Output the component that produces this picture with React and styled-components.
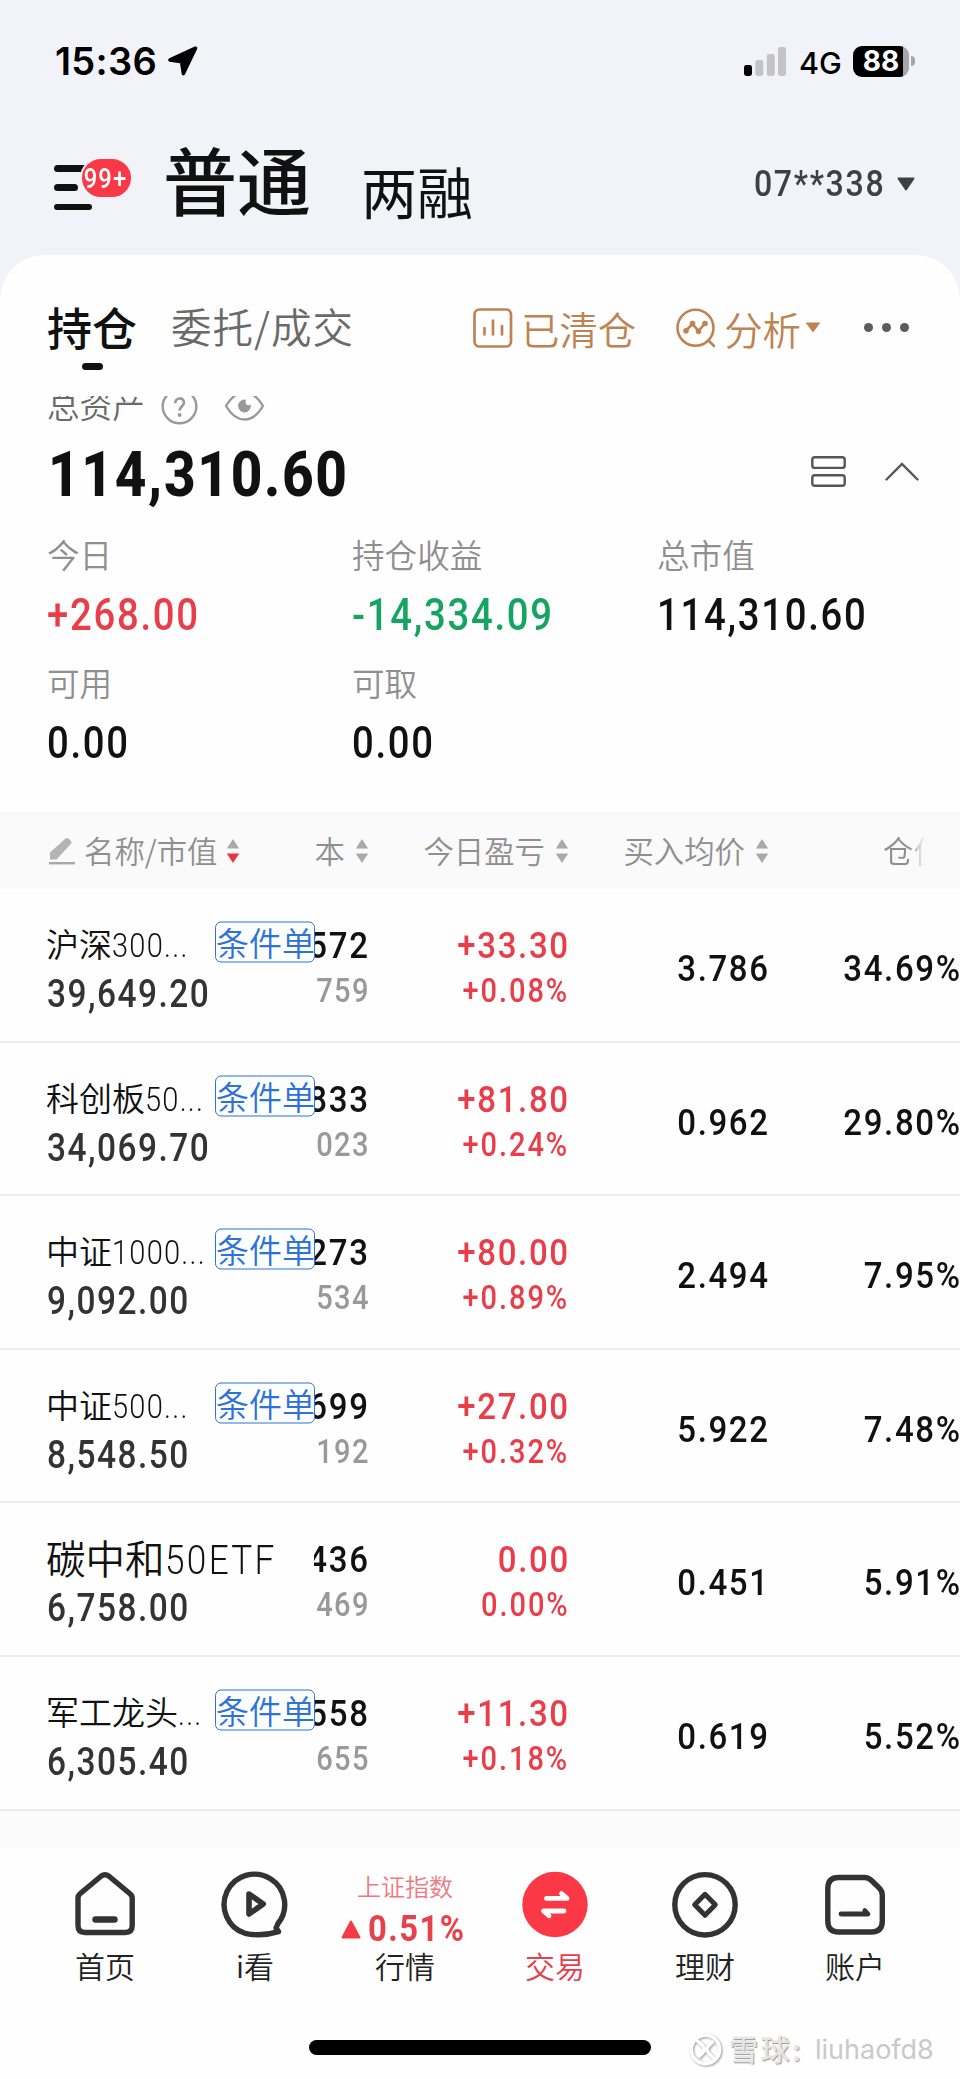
import React from "react";
import styled, { createGlobalStyle } from "styled-components";

const CJK = `"Noto Sans CJK SC", sans-serif`;
const DIGITS = `Roboto, "Noto Sans CJK SC", sans-serif`;
const SYSTEM = `Inter, "Liberation Sans", sans-serif`;

const COLORS = {
  page: "#f2f3f9",
  card: "#fefefe",
  ink: "#111111",
  dark: "#333333",
  mid: "#6a6a6a",
  grey: "#8f8f8f",
  up: "#e93d4a",
  down: "#16a561",
  gold: "#bf8353",
  blue: "#2f71d8",
};

const stats = [
  { label: "今日", value: "+268.00", color: COLORS.up },
  { label: "持仓收益", value: "-14,334.09", color: COLORS.down },
  { label: "总市值", value: "114,310.60" },
  { label: "可用", value: "0.00" },
  { label: "可取", value: "0.00" },
];

const holdings = [
  { name: "沪深", code: "300...", tag: true, value: "39,649.20", price: "572", cost: "759", gain: "+33.30", rate: "+0.08%", avg: "3.786", weight: "34.69%" },
  { name: "科创板", code: "50...", tag: true, value: "34,069.70", price: "833", cost: "023", gain: "+81.80", rate: "+0.24%", avg: "0.962", weight: "29.80%" },
  { name: "中证", code: "1000...", tag: true, value: "9,092.00", price: "273", cost: "534", gain: "+80.00", rate: "+0.89%", avg: "2.494", weight: "7.95%" },
  { name: "中证", code: "500...", tag: true, value: "8,548.50", price: "699", cost: "192", gain: "+27.00", rate: "+0.32%", avg: "5.922", weight: "7.48%" },
  { name: "碳中和", code: "50ETF", tag: false, value: "6,758.00", price: "436", cost: "469", gain: "0.00", rate: "0.00%", avg: "0.451", weight: "5.91%" },
  { name: "军工龙头", code: "...", tag: true, value: "6,305.40", price: "558", cost: "655", gain: "+11.30", rate: "+0.18%", avg: "0.619", weight: "5.52%" },
];

function StatusBar() {
  return (
    <Status>
      <Clock>15:36</Clock>
      <svg width="31" height="31" viewBox="0 0 31 31">
        <path
          d="M28.5 2.2 L3 14 L14.6 15.8 L16.4 27.6 Z"
          stroke="#000"
          strokeWidth="3.6"
          strokeLinejoin="round"
        />
      </svg>
      <Spacer />
      <svg width="42" height="30" viewBox="0 0 42 30">
        <rect x="0" y="19" width="8" height="11" rx="2.4" />
        <rect x="11.3" y="14" width="8" height="16" rx="2.4" fill="#c3c3c8" />
        <rect x="22.8" y="8" width="8" height="22" rx="2.4" fill="#c3c3c8" />
        <rect x="34" y="1" width="8" height="29" rx="2.4" fill="#c3c3c8" />
      </svg>
      <Network>4G</Network>
      <Battery>
        <span>88</span>
      </Battery>
      <BatteryTip />
    </Status>
  );
}

function AccountHeader() {
  return (
    <Header>
      <Menu>
        <MenuLine $width={34} />
        <MenuLine $width={24} />
        <MenuLine $width={38} />
        <Badge>
          <span>99+</span>
        </Badge>
      </Menu>
      <AccountType>普通</AccountType>
      <AccountType $small>两融</AccountType>
      <Spacer />
      <AccountNo>07**338</AccountNo>
      <svg width="18" height="14" viewBox="0 0 18 14">
        <path
          d="M1.5 1.5 H16.5 L9 12.5 Z"
          fill="#404044"
          stroke="#404044"
          strokeWidth="2"
          strokeLinejoin="round"
        />
      </svg>
    </Header>
  );
}

function CardTabs() {
  return (
    <Tabs>
      <Tab $active>持仓</Tab>
      <Tab>委托/成交</Tab>
      <Spacer />
      <Action>
        <svg width="40" height="40" viewBox="0 0 40 40" fill="none" stroke="currentColor" strokeWidth="2.7" strokeLinecap="round">
          <rect x="1.5" y="1.5" width="36.5" height="37" rx="5" />
          <path d="M11.5 20 V26.5 M20 12.5 V26.5 M29 18 V26.5" />
        </svg>
        已清仓
      </Action>
      <Action $gap={8}>
        <svg width="40" height="40" viewBox="0 0 40 40" fill="none" stroke="currentColor" strokeWidth="2.6" strokeLinecap="round">
          <circle cx="19.5" cy="19.8" r="18" />
          <path d="M33 33 L38 38" />
          <path d="M10 22.5 L16.5 16 L22.5 23 L29 15.5" />
          <g fill="currentColor" stroke="none">
            <circle cx="10" cy="22.8" r="2.8" />
            <circle cx="16.5" cy="15.6" r="2.8" />
            <circle cx="22.5" cy="23.2" r="2.8" />
            <circle cx="29" cy="15.5" r="2.8" />
          </g>
        </svg>
        分析
      </Action>
      <Caret width="16" height="11" viewBox="0 0 16 11">
        <path d="M0.5 0.5 H15.5 L8 10.5 Z" fill="#bf8353" />
      </Caret>
      <Dots>
        <i />
        <i />
        <i />
      </Dots>
    </Tabs>
  );
}

function Assets() {
  return (
    <>
      <AssetTitle>
        <span>总资产</span>
        <svg width="37" height="37" viewBox="0 0 37 37" fill="none" stroke="#999" strokeWidth="2.4">
          <circle cx="18.5" cy="18.5" r="16.8" />
          <path d="M14.2 15.2 C14.2 8.8 23.2 9 23 14.8 C22.9 18.2 18.7 18.4 18.6 22.6" strokeWidth="2.6" />
          <circle cx="18.6" cy="27" r="1.9" fill="#999" stroke="none" />
        </svg>
        <svg width="41" height="30" viewBox="0 0 41 30" fill="none" stroke="#999" strokeWidth="2.4">
          <path d="M2 15 Q10 1.5 20.5 1.5 Q31 1.5 39 15 Q31 28.5 20.5 28.5 Q10 28.5 2 15 Z" strokeLinejoin="round" />
          <circle cx="20.5" cy="15" r="6.4" fill="#999" stroke="none" />
          <circle cx="24.8" cy="11" r="3.2" fill="#fefefe" stroke="none" />
        </svg>
      </AssetTitle>
      <TotalRow>
        <Total>114,310.60</Total>
        <Spacer />
        <svg width="35" height="31" viewBox="0 0 35 31" fill="none" stroke="#555" strokeWidth="2.4">
          <rect x="1.3" y="1.3" width="32.4" height="10.6" rx="2.5" />
          <rect x="1.3" y="19.2" width="32.4" height="10.6" rx="2.5" />
        </svg>
        <svg width="34" height="19" viewBox="0 0 34 19" fill="none" stroke="#555" strokeWidth="2.4" strokeLinecap="round">
          <path d="M1.5 17.5 L17 2 L32.5 17.5" />
        </svg>
      </TotalRow>
      <StatGrid>
        {stats.map((item) => (
          <div key={item.label}>
            <StatLabel>{item.label}</StatLabel>
            <StatValue $color={item.color}>{item.value}</StatValue>
          </div>
        ))}
      </StatGrid>
    </>
  );
}

function SortArrows({ active }) {
  return (
    <svg width="14" height="26" viewBox="0 0 14 26">
      <path d="M7 1 L13.2 10.5 H0.8 Z" fill="#a9a9a9" />
      <path d="M7 25 L13.2 15.5 H0.8 Z" fill={active ? "#e8343f" : "#a9a9a9"} />
    </svg>
  );
}

function TableHead() {
  return (
    <HeadRow>
      <HeadCell $left>
        <svg width="26" height="28" viewBox="0 0 26 28">
          <path d="M1 22.5 V15.5 L16.5 1.5 Q18 0.3 19.5 1.5 L22 4 Q23.2 5.4 22 6.8 L7.5 22.5 Z" fill="#b4b4b4" />
          <rect x="0" y="25" width="26" height="2.4" fill="#a9a9a9" />
        </svg>
        <span>名称/市值</span>
        <SortArrows active />
      </HeadCell>
      <HeadCell>
        <span>本</span>
        <SortArrows />
      </HeadCell>
      <HeadCell>
        <span>今日盈亏</span>
        <SortArrows />
      </HeadCell>
      <HeadCell>
        <span>买入均价</span>
        <SortArrows />
      </HeadCell>
      <FadedCell>仓位</FadedCell>
    </HeadRow>
  );
}

function HoldingRow({ item }) {
  const gainColor = COLORS.up;

  return (
    <Row>
      <NameCell>
        <NameLine $large={!item.tag}>
          {item.name}
          <Code $large={!item.tag}>{item.code}</Code>
          {item.tag && <Tag>条件单</Tag>}
        </NameLine>
        <MarketValue>{item.value}</MarketValue>
      </NameCell>
      <PairCell $clip>
        <Figure>{item.price}</Figure>
        <SubFigure $color="#999">{item.cost}</SubFigure>
      </PairCell>
      <PairCell>
        <Figure $color={gainColor}>{item.gain}</Figure>
        <SubFigure $color={gainColor} $wide>{item.rate}</SubFigure>
      </PairCell>
      <SingleCell>{item.avg}</SingleCell>
      <SingleCell>{item.weight}</SingleCell>
    </Row>
  );
}

function BottomNav() {
  const line = { fill: "none", stroke: "#333", strokeWidth: 5.4, strokeLinejoin: "round", strokeLinecap: "round" };

  return (
    <Nav>
      <NavItem>
        <NavIcon viewBox="0 0 68 68" {...line}>
          <path d="M7 27 Q7 24.5 9 22.8 L30 5.2 Q34 2.2 38 5.2 L59 22.8 Q61.2 24.5 61.2 27 V54.5 Q61.2 61.5 54.2 61.5 H14 Q7 61.5 7 54.5 Z" />
          <path d="M24.5 48.5 H43.5" strokeWidth="6.4" />
        </NavIcon>
        <span>首页</span>
      </NavItem>
      <NavItem>
        <NavIcon viewBox="0 0 68 68" {...line}>
          <path d="M57 52.5 A30.3 30.3 0 1 0 24 62.3 Q40 66 57.5 60.6 L55 57 Z" />
          <path d="M28 23 L42.3 33 L28 43 Z" strokeWidth="5.6" />
        </NavIcon>
        <span>i看</span>
      </NavItem>
      <NavItem>
        <Quote>
          <QuoteName>上证指数</QuoteName>
          <QuoteRate>
            <svg width="20" height="19" viewBox="0 0 20 19">
              <path d="M10 1.5 L18.5 17.5 H1.5 Z" fill="#f53a45" stroke="#f53a45" strokeWidth="2" strokeLinejoin="round" />
            </svg>
            <span>0.51%</span>
          </QuoteRate>
        </Quote>
        <span>行情</span>
      </NavItem>
      <NavItem $active>
        <NavIcon viewBox="0 0 68 68">
          <circle cx="34" cy="33.5" r="32.7" fill="#fa3846" />
          <path d="M25.5 27.4 H46 L40.5 22.6 M43 40 H22.5 L28 44.8" fill="none" stroke="#fff" strokeWidth="4.8" strokeLinecap="round" strokeLinejoin="round" />
        </NavIcon>
        <span>交易</span>
      </NavItem>
      <NavItem>
        <NavIcon viewBox="0 0 68 68" {...line}>
          <circle cx="34" cy="33.8" r="30.2" />
          <path d="M34 23.3 L44.3 33.8 L34 44.3 L23.7 33.8 Z" strokeWidth="5" />
        </NavIcon>
        <span>理财</span>
      </NavItem>
      <NavItem>
        <NavIcon viewBox="0 0 68 68" {...line}>
          <path d="M17.5 6.5 H43.5 Q47.5 6.5 50.5 9.5 L57.5 16.2 Q61.3 19.5 61.3 24 V50 Q61.3 61 50.5 61 H17.5 Q6.8 61 6.8 50 V17.5 Q6.8 6.5 17.5 6.5 Z" />
          <path d="M20 43 H47 L43.8 39.5" strokeWidth="4.8" />
        </NavIcon>
        <span>账户</span>
      </NavItem>
    </Nav>
  );
}

export default function App() {
  return (
    <Screen>
      <GlobalStyle />
      <StatusBar />
      <AccountHeader />
      <Card>
        <CardTabs />
        <Assets />
        <TableHead />
        <List>
          {holdings.map((item) => (
            <HoldingRow key={item.value} item={item} />
          ))}
          <PeekRow>创新药产业</PeekRow>
        </List>
        <BottomNav />
        <Footer>
          <HomeBar />
          <Watermark>
            <svg width="33" height="33" viewBox="0 0 33 33" fill="none" stroke="#fff" strokeWidth="3.4">
              <circle cx="16.5" cy="16.5" r="14.2" />
              <path d="M7 6.5 L14 13 Q17 16.5 13.5 20 L9 24.5 M26 26.5 L19.5 20 Q16.5 16.5 19.5 13 L24.5 8" />
            </svg>
            <b>雪球:</b>
            <span>liuhaofd8</span>
          </Watermark>
        </Footer>
      </Card>
    </Screen>
  );
}

const GlobalStyle = createGlobalStyle`
  body {
    margin: 0;
    background: ${COLORS.card};
  }

  * {
    box-sizing: border-box;
  }

  svg {
    display: block;
    flex-shrink: 0;
  }
`;

// Roboto squeezed to the proportions of a DIN face
const condensed = `
  letter-spacing: 0.045em;
  transform: scaleX(0.88);
  transform-origin: left center;
`;

const condensedRight = `
  ${condensed}
  margin-right: -0.045em;
  transform-origin: right center;
`;

const Screen = styled.div`
  width: 960px;
  height: 2079px;
  overflow: hidden;
  background: ${COLORS.page};
  color: ${COLORS.ink};
  font-family: ${CJK};
  font-weight: 350;
  white-space: nowrap;
`;

const Spacer = styled.div`
  flex: 1;
`;

const Status = styled.div`
  display: flex;
  align-items: center;
  height: 122px;
  padding: 0 45px 0 55px;
  color: #000;
  font-family: ${SYSTEM};
`;

const Clock = styled.div`
  width: 112px;
  font-size: 38px;
  font-weight: 600;
  letter-spacing: 0.3px;
`;

const Network = styled.div`
  margin: 2px 0 0 13px;
  width: 54px;
  font-size: 30.5px;
  font-weight: 500;
`;

const Battery = styled.div`
  display: flex;
  align-items: center;
  justify-content: center;
  width: 56px;
  height: 31px;
  border-radius: 9px;
  background: linear-gradient(90deg, #000 50px, #a5a5aa 50px);
  color: #fff;
  font-size: 28px;
  font-weight: 700;
  line-height: 31px;
`;

const BatteryTip = styled.div`
  width: 4px;
  height: 10px;
  margin-left: 2px;
  border-radius: 0 5px 5px 0;
  background: #a5a5aa;
`;

const Header = styled.header`
  display: flex;
  align-items: center;
  height: 133px;
  padding: 0 45px 10px 54px;
`;

const Menu = styled.div`
  position: relative;
  display: flex;
  flex-direction: column;
  justify-content: space-between;
  width: 109px;
  height: 45px;
  margin-top: 8px;
`;

const MenuLine = styled.div`
  width: ${({ $width }) => $width}px;
  height: 6.5px;
  border-radius: 4px;
  background: ${COLORS.ink};
`;

const Badge = styled.div`
  position: absolute;
  top: -8px;
  left: 26px;
  width: 53px;
  height: 42px;
  border: 2.5px solid ${COLORS.page};
  border-radius: 21px;
  background: #fa3846;
  color: #fff;
  font: 500 27px/40px ${DIGITS};

  span {
    display: block;
    padding-left: 2px;
    ${condensed}
  }
`;

const AccountType = styled.div`
  width: ${({ $small }) => ($small ? "auto" : "198px")};
  margin-top: ${({ $small }) => ($small ? 12 : -11)}px;
  font-size: ${({ $small }) => ($small ? 56 : 74)}px;
  font-weight: ${({ $small }) => ($small ? 400 : 500)};
  line-height: 80px;
`;

const AccountNo = styled.div`
  color: #404044;
  font: 500 36.5px/50px ${DIGITS};
  ${condensedRight}
  margin-right: 12px;
  letter-spacing: 0.052em;
`;

const Card = styled.main`
  display: flex;
  flex-direction: column;
  height: 1824px;
  border-radius: 45px 45px 0 0;
  background: ${COLORS.card};
`;

const Tabs = styled.div`
  display: flex;
  align-items: center;
  height: 141px;
  padding: 0 50px 0 47px;
`;

const Tab = styled.div`
  position: relative;
  margin: ${({ $active }) => ($active ? 2 : 0)}px 34px 0 0;
  color: ${({ $active }) => ($active ? COLORS.ink : COLORS.mid)};
  font-size: ${({ $active }) => ($active ? 45 : 40.5)}px;
  font-weight: ${({ $active }) => ($active ? 500 : 350)};
  letter-spacing: ${({ $active }) => ($active ? 0 : 1)}px;
  line-height: 60px;

  &::after {
    content: "";
    position: absolute;
    bottom: -13px;
    left: 35px;
    width: 21px;
    height: 7px;
    border-radius: 3.5px;
    background: ${({ $active }) => ($active ? COLORS.ink : "transparent")};
  }
`;

const Action = styled.div`
  display: flex;
  align-items: center;
  gap: ${({ $gap }) => $gap || 8}px;
  margin: 4px 0 0 40px;
  color: ${COLORS.gold};
  font-size: 38.4px;
  line-height: 50px;
`;

const Caret = styled.svg`
  margin: 4px 0 0 4px;
`;

const Dots = styled.div`
  display: flex;
  gap: 9px;
  margin: 3px 1px 0 43px;

  i {
    width: 9px;
    height: 9px;
    border-radius: 50%;
    background: #5c5c5c;
  }
`;

const AssetTitle = styled.div`
  display: flex;
  align-items: center;
  height: 30px;
  padding-left: 47px;
  overflow: hidden;
  color: ${COLORS.mid};
  font-size: 32.6px;

  span {
    width: 114px;
    line-height: 44px;
    margin-top: -14px;
  }

  svg {
    margin-top: -10px;
    margin-right: 26px;
  }
`;

const TotalRow = styled.div`
  display: flex;
  align-items: center;
  gap: 39px;
  height: 92px;
  padding: 0 41px 2px 48px;
`;

const Total = styled.div`
  padding-top: 8px;
  font: 800 62.5px/80px ${DIGITS};
  ${condensed}
  letter-spacing: 0.03em;
`;

const StatGrid = styled.div`
  display: grid;
  grid-template-columns: repeat(3, 305px);
  grid-auto-rows: 128px;
  height: 294px;
  padding: 12px 0 0 47px;
`;

const StatLabel = styled.div`
  color: ${COLORS.grey};
  font-size: 32.6px;
  line-height: 48px;
`;

const StatValue = styled.div`
  padding-top: 8px;
  color: ${({ $color }) => $color || COLORS.ink};
  font: 500 43.5px/60px ${DIGITS};
  ${condensed}
`;

const columns = `
  display: grid;
  grid-template-columns: 267px 54px 200px 200px 192px;
  padding-left: 47px;
  overflow: hidden;
`;

const HeadRow = styled.div`
  ${columns}
  align-items: center;
  height: 77px;
  background: #fafafa;
`;

const HeadCell = styled.div`
  display: flex;
  align-items: center;
  justify-content: ${({ $left }) => ($left ? "flex-start" : "flex-end")};
  gap: ${({ $left }) => ($left ? 9 : 10)}px;
  margin-right: ${({ $left }) => ($left ? 0 : -1)}px;
  color: ${COLORS.grey};
  font-size: 30.4px;
  line-height: 44px;
  padding-left: ${({ $left }) => ($left ? 2 : 0)}px;

  span {
    margin-top: -2px;
  }
`;

const FadedCell = styled.div`
  width: 42px;
  margin: -2px 0 0 115px;
  overflow: hidden;
  color: ${COLORS.grey};
  font-size: 30.4px;
  line-height: 44px;
  mask-image: linear-gradient(90deg, #000 26px, transparent);
`;

const List = styled.div`
  height: 959px;
  overflow: hidden;
`;

const Row = styled.div`
  ${columns}
  height: 153.6px;
  border-bottom: 2px solid #ebebeb;
`;

const NameCell = styled.div`
  position: relative;
  z-index: 1;
  padding-top: 29px;
`;

const NameLine = styled.div`
  display: flex;
  align-items: baseline;
  height: 50px;
  margin: 0 -1px 0 -1px;
  font-size: ${({ $large }) => ($large ? 39.5 : 33)}px;
  font-weight: 350;
  line-height: 50px;
`;

const Code = styled.span`
  margin-right: -12px;
  font-family: ${DIGITS};
  font-weight: 300;
  font-size: ${({ $large }) => ($large ? 40 : 33)}px;
  line-height: 40px;
  ${condensed}
  letter-spacing: ${({ $large }) => ($large ? 2.6 : 1.4)}px;
`;

const Tag = styled.div`
  width: 100px;
  height: 41px;
  margin-left: auto;
  border: 1.5px solid ${COLORS.blue};
  border-radius: 6px;
  background: #fbfeff;
  color: ${COLORS.blue};
  font-size: 33px;
  line-height: 38px;
  transform: translateY(-1.5px);
`;

const MarketValue = styled.div`
  padding-top: 1px;
  color: ${COLORS.dark};
  font: 500 38px/50px ${DIGITS};
  ${condensed}
`;

const PairCell = styled.div`
  display: flex;
  flex-direction: column;
  align-items: flex-end;
  padding-top: 33px;
  overflow: ${({ $clip }) => ($clip ? "hidden" : "visible")};
`;

const Figure = styled.div`
  color: ${({ $color }) => $color || COLORS.ink};
  font: 500 37.5px/46px ${DIGITS};
  ${condensedRight}
  letter-spacing: 0.05em;
`;

const SubFigure = styled.div`
  color: ${({ $color }) => $color};
  font: 500 33px/46px ${DIGITS};
  ${condensedRight}
  letter-spacing: ${({ $wide }) => ($wide ? 0.066 : 0.045)}em;
`;

const SingleCell = styled.div`
  padding-top: 54px;
  font: 500 37.5px/50px ${DIGITS};
  ${condensedRight}
  letter-spacing: 0.05em;
  text-align: right;
`;

const PeekRow = styled.div`
  height: 40px;
  padding-left: 47px;
  overflow: hidden;
  background: #fbfbfb;
  font-size: 33px;
  line-height: 102px;
`;

const Nav = styled.nav`
  display: grid;
  grid-template-columns: repeat(6, 150px);
  height: 150px;
  padding: 23px 30px 0;
`;

const NavItem = styled.div`
  display: flex;
  flex-direction: column;
  align-items: center;
  color: ${({ $active }) => ($active ? "#e5404c" : "#222")};
  font-size: 30px;
  line-height: 44px;

  & > span {
    margin-top: 4px;
  }
`;

const NavIcon = styled.svg`
  width: 68px;
  height: 68px;
`;

const Quote = styled.div`
  display: flex;
  flex-direction: column;
  align-items: center;
  height: 68px;
`;

const QuoteName = styled.div`
  color: #ef7983;
  font-size: 24px;
  line-height: 30px;
`;

const QuoteRate = styled.div`
  display: flex;
  align-items: center;
  gap: 7px;
  padding-top: 9px;
  margin-right: 5px;
  color: #e8404c;
  font: 700 36px/38px ${DIGITS};

  span {
    width: 97px;
    ${condensed}
    transform: scaleX(0.91);
  }
`;

const Footer = styled.footer`
  display: flex;
  align-items: flex-start;
  height: 81px;
  padding: 34px 0 0 309px;
`;

const HomeBar = styled.div`
  width: 342px;
  height: 15px;
  margin-top: 8px;
  border-radius: 8px;
  background: #000;
`;

const Watermark = styled.div`
  display: flex;
  align-items: center;
  height: 34px;
  margin-left: 38px;
  color: #c9c9c9;

  svg {
    filter: drop-shadow(1.5px 1.5px 1px #999);
  }

  b {
    width: 86px;
    margin: -3px 0 0 7px;
    color: #e6e6e6;
    font-size: 29px;
    font-weight: 500;
    letter-spacing: 2.5px;
    text-shadow: 1px 1.2px 1px #999;
  }

  span {
    font-family: ${SYSTEM};
    font-size: 27px;
    font-weight: 400;
  }
`;
